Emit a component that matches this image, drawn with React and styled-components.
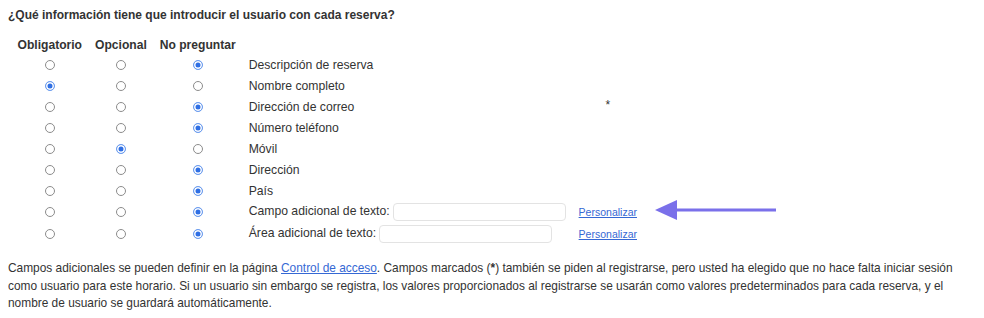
import React from 'react';
import styled, { createGlobalStyle } from 'styled-components';

const GlobalStyle = createGlobalStyle`
  body {
    margin: 8px;
    background: #ffffff;
    font-family: "Liberation Sans", Arial, sans-serif;
    font-size: 12.2px;
    color: #333333;
  }
`;

const fields = [
  { label: 'Descripción de reserva', value: 2 },
  { label: 'Nombre completo', value: 0 },
  { label: 'Dirección de correo', value: 2, star: true },
  { label: 'Número teléfono', value: 2 },
  { label: 'Móvil', value: 1 },
  { label: 'Dirección', value: 2 },
  { label: 'País', value: 2 },
  { label: 'Campo adicional de texto:', value: 2, input: 'text' },
  { label: 'Área adicional de texto:', value: 2, input: 'area' },
];

const Title = styled.h3`
  margin: 0;
  font-size: 12px;
  font-weight: 700;
  color: #333333;
  line-height: 15px;
`;

const Wrap = styled.div`
  position: relative;
`;

const Table = styled.table`
  border-collapse: collapse;
  margin: 12px 0 0 3px;
`;

const Th = styled.th`
  font-size: 12.1px;
  font-weight: 700;
  color: #333333;
  padding: 0 6.5px;
  height: 19px;
  text-align: center;
  white-space: nowrap;
`;

const Td = styled.td`
  padding: 0 6.5px;
  height: ${(p) => (p.$tall ? '23px' : '21px')};
  text-align: ${(p) => p.$align || 'left'};
  vertical-align: middle;
  white-space: nowrap;
`;

const Radio = styled.input.attrs({ type: 'radio' })`
  appearance: none;
  -webkit-appearance: none;
  width: 10px;
  height: 10px;
  border-radius: 50%;
  border: 1px solid #8c8c8c;
  background: #ffffff;
  display: block;
  margin: 0 auto;

  &:checked {
    border-color: #6f9fef;
    background: #2f6fe4;
    box-shadow: inset 0 0 0 1.5px #ffffff;
  }
`;

const Label = styled.span`
  color: #333333;
`;

const TextInput = styled.input`
  width: 173px;
  height: 18px;
  box-sizing: border-box;
  border: 1px solid #e3e3e3;
  border-radius: 4px;
  margin-left: 3px;
  vertical-align: middle;
  padding: 0 4px;
`;

const TextArea = styled.textarea`
  width: 173px;
  height: 18px;
  box-sizing: border-box;
  border: 1px solid #e3e3e3;
  border-radius: 4px;
  margin-left: 3px;
  vertical-align: middle;
  resize: none;
  padding: 0 4px;
`;

const Small = styled.a`
  font-size: 10.5px;
  color: #3568d4;
  text-decoration: underline;
  cursor: pointer;
`;

const Star = styled.span`
  color: #333333;
  font-size: 12px;
  position: relative;
  top: -2px;
`;

const Arrow = styled.svg`
  position: absolute;
  left: 639px;
  top: 184px;
`;

const Note = styled.p`
  margin: 15px 0 0;
  font-size: 11.9px;
  line-height: 17.5px;
  color: #333333;
`;

const Link = styled.a`
  color: #3568d4;
  text-decoration: underline;
`;

export default function App() {
  return (
    <>
      <GlobalStyle />
      <Wrap>
        <Title>¿Qué información tiene que introducir el usuario con cada reserva?</Title>
        <Table>
          <thead>
            <tr>
              <Th>Obligatorio</Th>
              <Th>Opcional</Th>
              <Th>No preguntar</Th>
              <Th />
              <Th />
            </tr>
          </thead>
          <tbody>
            {fields.map((f, i) => (
              <tr key={f.label}>
                {[0, 1, 2].map((c) => (
                  <Td key={c} $tall={f.input === 'area'}>
                    <Radio name={`f${i}`} defaultChecked={f.value === c} />
                  </Td>
                ))}
                <Td>
                  <Label>{f.label}</Label>
                  {f.input === 'text' && <TextInput type="text" />}
                  {f.input === 'area' && <TextArea rows={1} />}
                </Td>
                <Td $align="center">
                  {f.star && <Star>*</Star>}
                  {f.input && <Small>Personalizar</Small>}
                </Td>
              </tr>
            ))}
          </tbody>
        </Table>
        <Arrow width="140" height="34" viewBox="0 0 140 34">
          <path d="M8 18 L30 8 L30 28 Z" fill="#7a70ea" />
          <rect x="28" y="16.5" width="101" height="3" fill="#7a70ea" />
        </Arrow>
        <Note>
          Campos adicionales se pueden definir en la página <Link>Control de acceso</Link>. Campos marcados (<b>*</b>) también se piden al registrarse, pero usted ha elegido que no hace falta iniciar sesión como usuario para este horario. Si un usuario sin embargo se registra, los valores proporcionados al registrarse se usarán como valores predeterminados para cada reserva, y el nombre de usuario se guardará automáticamente.
        </Note>
      </Wrap>
    </>
  );
}
